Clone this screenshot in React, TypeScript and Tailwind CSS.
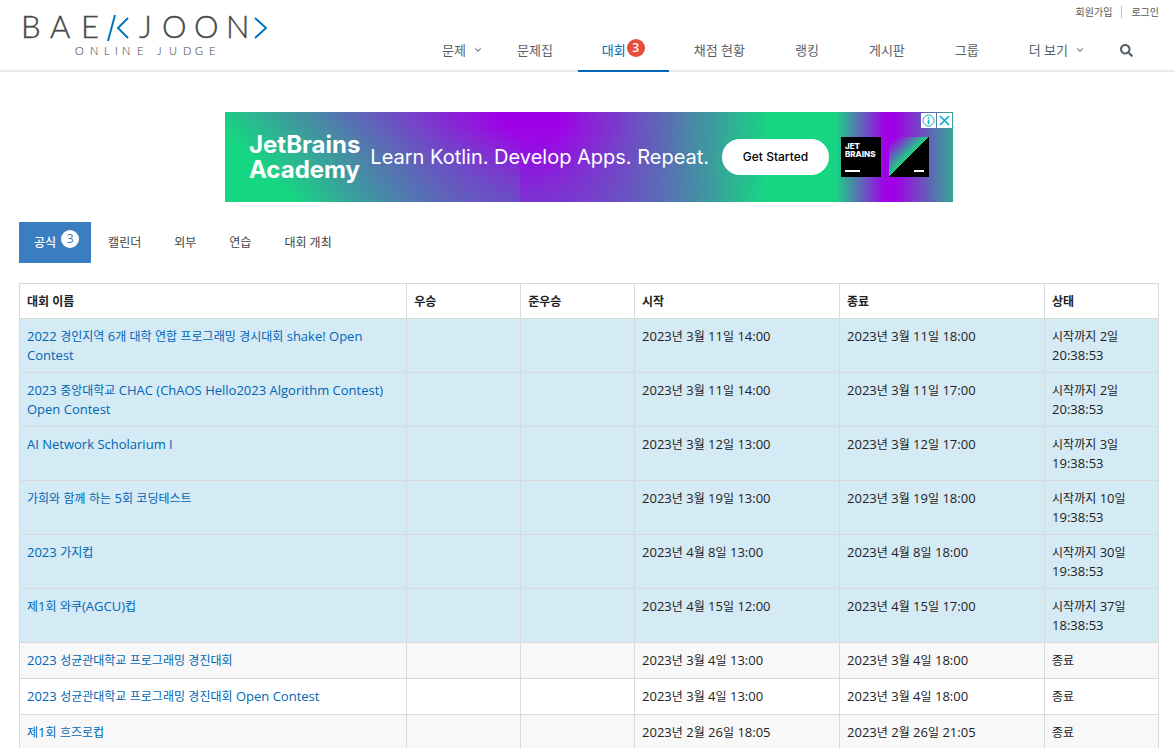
import { ChevronDown } from "lucide-react";
import { FaSearch } from "react-icons/fa";

interface NavItem {
  label: string;
  badge?: number;
  dropdown?: boolean;
  active?: boolean;
}

interface Contest {
  name: string;
  start: string;
  end: string;
  status: string;
  upcoming?: boolean;
}

const navItems: NavItem[] = [
  { label: "문제", dropdown: true },
  { label: "문제집" },
  { label: "대회", badge: 3, active: true },
  { label: "채점 현황" },
  { label: "랭킹" },
  { label: "게시판" },
  { label: "그룹" },
  { label: "더 보기", dropdown: true },
];

const tabs = ["캘린더", "외부", "연습", "대회 개최"];

const contests: Contest[] = [
  {
    name: "2022 경인지역 6개 대학 연합 프로그래밍 경시대회 shake! Open Contest",
    start: "2023년 3월 11일 14:00",
    end: "2023년 3월 11일 18:00",
    status: "시작까지 2일 20:38:53",
    upcoming: true,
  },
  {
    name: "2023 중앙대학교 CHAC (ChAOS Hello2023 Algorithm Contest) Open Contest",
    start: "2023년 3월 11일 14:00",
    end: "2023년 3월 11일 17:00",
    status: "시작까지 2일 20:38:53",
    upcoming: true,
  },
  {
    name: "AI Network Scholarium I",
    start: "2023년 3월 12일 13:00",
    end: "2023년 3월 12일 17:00",
    status: "시작까지 3일 19:38:53",
    upcoming: true,
  },
  {
    name: "가희와 함께 하는 5회 코딩테스트",
    start: "2023년 3월 19일 13:00",
    end: "2023년 3월 19일 18:00",
    status: "시작까지 10일 19:38:53",
    upcoming: true,
  },
  {
    name: "2023 가지컵",
    start: "2023년 4월 8일 13:00",
    end: "2023년 4월 8일 18:00",
    status: "시작까지 30일 19:38:53",
    upcoming: true,
  },
  {
    name: "제1회 와쿠(AGCU)컵",
    start: "2023년 4월 15일 12:00",
    end: "2023년 4월 15일 17:00",
    status: "시작까지 37일 18:38:53",
    upcoming: true,
  },
  {
    name: "2023 성균관대학교 프로그래밍 경진대회",
    start: "2023년 3월 4일 13:00",
    end: "2023년 3월 4일 18:00",
    status: "종료",
  },
  {
    name: "2023 성균관대학교 프로그래밍 경진대회 Open Contest",
    start: "2023년 3월 4일 13:00",
    end: "2023년 3월 4일 18:00",
    status: "종료",
  },
  {
    name: "제1회 흐즈로컵",
    start: "2023년 2월 26일 18:05",
    end: "2023년 2월 26일 21:05",
    status: "종료",
  },
];

// Hangul is set one size below the Latin text around it
function Mixed({ text }: { text: string }) {
  return (
    <>
      {text.split(/([가-힣]+|\s)/).map((part, i) => {
        if (!part.trim()) return part;
        return (
          <span key={i} className={/[가-힣]/.test(part) ? "text-[12px] leading-none" : undefined}>
            {part}
          </span>
        );
      })}
    </>
  );
}

function Logo() {
  return (
    <svg width="250" height="60" viewBox="0 -8 250 60" role="img" aria-label="Baekjoon Online Judge">
      <g fill="#4a4a4a" stroke="#4a4a4a" fontFamily="Lato, sans-serif" fontWeight="300">
        <text y="26" fontSize="31" strokeWidth="0.4" x="0 29 60">
          BAE
        </text>
        <text y="26" fontSize="31" strokeWidth="0.4" x="118 141 173 205">
          JOON
        </text>
        <text y="43" fontSize="11" strokeWidth="0.1" x="54 69 83 94 101 116 136 148 162 174 188">
          ONLINEJUDGE
        </text>
      </g>
      <g fill="none" stroke="#0076c0" strokeWidth="2">
        <path d="M94 3 L87 29" />
        <path d="M107 6 L97 16 L107 26" />
        <path d="M234 6 L245 16 L234 26" />
      </g>
    </svg>
  );
}

function Header() {
  return (
    <header className="flex h-[72px] justify-between border-b-2 border-[#eaeaea] pl-[21px] pr-4">
      <a href="#" className="pt-1">
        <Logo />
      </a>
      <div className="flex flex-col items-end justify-between">
        <div className="flex items-center pt-1 text-[10px] leading-4 text-[#555]">
          <a href="#">회원가입</a>
          <span className="mx-[9px] h-3 w-px bg-[#bbb]" />
          <a href="#">로그인</a>
        </div>
        <nav className="-mb-0.5 flex items-end">
          {navItems.map((item) => (
            <a
              key={item.label}
              href="#"
              className={
                item.active
                  ? "flex h-11 items-start border-b-2 border-[#0066b3] px-6 text-[13px] leading-5 text-[#0066b3]"
                  : item.dropdown
                    ? "flex h-11 items-start pl-[25px] pr-[9px] text-[13px] leading-5 text-[#585f69]"
                    : "flex h-11 items-start px-[25px] text-[13px] leading-5 text-[#585f69]"
              }
            >
              <span className="pt-3">{item.label}</span>
              {item.badge && (
                <span className="ml-px mt-[11px] size-[18px] rounded-full bg-[#e74c3c] text-center text-[12px] font-semibold leading-[18px] text-white">
                  {item.badge}
                </span>
              )}
              {item.dropdown && (
                <ChevronDown className="ml-[7px] mt-[17px] size-2.5" strokeWidth={2.5} />
              )}
            </a>
          ))}
          <button type="button" aria-label="검색" className="h-11 px-[26px] text-[#585f69]">
            <FaSearch className="size-[13px]" />
          </button>
        </nav>
      </div>
    </header>
  );
}

function AdBanner() {
  return (
    <div className="relative mx-auto flex h-[90px] w-[728px] items-center pl-6 font-[Inter,sans-serif] text-white [background:radial-gradient(ellipse_220px_75px_at_295px_90px,rgba(90,100,190,0.5),rgba(90,100,190,0)),linear-gradient(45deg,#17d682_50px,#a000e8_255px)_0_0/295px_90px_no-repeat,radial-gradient(ellipse_250px_500px_at_0_0,#a000e8_15%,#17d682)_295px_0/255px_90px_no-repeat,linear-gradient(90deg,#17d682_60px,#a000e8_110px,#a000e8_120px,#35a894_178px)_550px_0/178px_90px_no-repeat]">
      <p className="text-[24px] font-bold leading-[25px]">
        JetBrains
        <br />
        Academy
      </p>
      <p className="ml-2.5 whitespace-nowrap text-[20px] leading-6">
        Learn Kotlin. Develop Apps. Repeat.
      </p>
      <div className="ml-auto mr-6 flex items-center">
        <button
          type="button"
          className="h-9 w-[107px] rounded-full bg-white text-[12px] font-medium text-black"
        >
          Get Started
        </button>
        <div className="ml-3 flex size-10 flex-col justify-between bg-black px-1 py-[5px] text-[8px] font-extrabold leading-2">
          <span>
            JET
            <br />
            BRAINS
          </span>
          <span className="h-0.5 w-[15px] bg-white" />
        </div>
        <div className="ml-2 flex size-10 items-end justify-end bg-[linear-gradient(135deg,#a000e8_5px,#17d682_28px,#000_28px)] p-[5px]">
          <span className="h-0.5 w-2.5 bg-white" />
        </div>
      </div>
      <div className="absolute right-0 top-0 flex gap-px p-px">
        <button type="button" aria-label="광고 정보" className="size-[15px] bg-white">
          <svg width="15" height="15" viewBox="0 0 15 15" fill="none" stroke="#00aecd">
            <circle cx="7.5" cy="7.5" r="5.5" />
            <path d="M7.5 6.5 V11 M7.5 4 V5.5" strokeWidth="1.6" />
          </svg>
        </button>
        <button type="button" aria-label="광고 닫기" className="size-[15px] bg-white">
          <svg width="15" height="15" viewBox="0 0 15 15" stroke="#00aecd" strokeWidth="1.6">
            <path d="M3 3 L12 12 M12 3 L3 12" />
          </svg>
        </button>
      </div>
    </div>
  );
}

function ContestTable() {
  return (
    <table className="mt-5 w-full table-fixed border-collapse text-[13px] leading-[19px] text-[#222] [&_td]:border [&_td]:border-[#d9d9d9] [&_td]:px-[7px] [&_td]:pb-[7px] [&_td]:pt-2 [&_td]:align-top [&_th]:border [&_th]:border-[#d9d9d9] [&_th]:px-[7px] [&_th]:text-left [&_th]:text-[12px]">
      <thead>
        <tr className="h-[35px]">
          <th className="w-[34%]">대회 이름</th>
          <th className="w-[10%]">우승</th>
          <th className="w-[10%]">준우승</th>
          <th className="w-[18%]">시작</th>
          <th className="w-[18%]">종료</th>
          <th className="w-[10%]">상태</th>
        </tr>
      </thead>
      <tbody>
        {contests.map((contest) => (
          <tr
            key={contest.name}
            className={contest.upcoming ? "bg-[#d4eaf5]" : "h-9 odd:bg-[#f8f8f8]"}
          >
            <td>
              <a href="#" className="text-[#0066b3]">
                <Mixed text={contest.name} />
              </a>
            </td>
            <td />
            <td />
            <td>
              <Mixed text={contest.start} />
            </td>
            <td>
              <Mixed text={contest.end} />
            </td>
            <td>
              <Mixed text={contest.status} />
            </td>
          </tr>
        ))}
      </tbody>
    </table>
  );
}

export default function App() {
  return (
    <div className="h-screen overflow-hidden bg-white font-['Open_Sans','Noto_Sans_CJK_KR',sans-serif]">
      <Header />
      <main className="pl-[19px] pr-4 pt-10">
        <AdBanner />
        <div className="mt-5 flex gap-px text-[12px] leading-5 text-[#444]">
          <a href="#" className="flex h-[41px] items-start bg-[#3a7dc1] pl-[15px] pr-3 font-medium text-white">
            <span className="pt-[11px]">공식</span>
            <span className="ml-[5px] mt-2 size-[18px] rounded-full bg-white text-center leading-[18px] text-[#3a7dc1]">
              3
            </span>
          </a>
          {tabs.map((tab) => (
            <a key={tab} href="#" className="px-4 pt-[11px]">
              {tab}
            </a>
          ))}
        </div>
        <ContestTable />
      </main>
    </div>
  );
}
